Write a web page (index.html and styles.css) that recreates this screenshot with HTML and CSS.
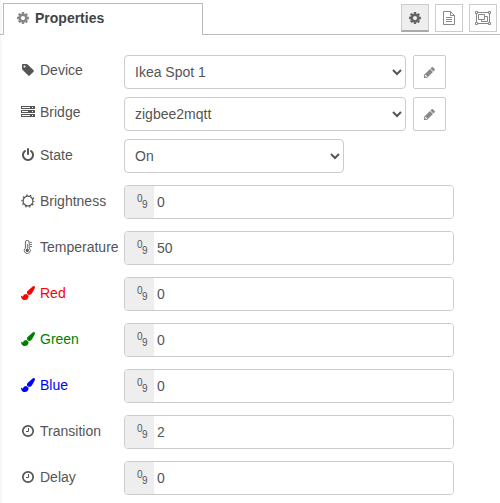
FILE: index.html
```
<!DOCTYPE html>
<html lang="en">
<head>
<meta charset="utf-8">
<title>Properties</title>
<link rel="stylesheet" href="styles.css">
</head>
<body>
<svg class="defs" aria-hidden="true">
  <symbol id="cog" viewBox="0 0 1792 1792"><path d="M1152 896q0-106-75-181t-181-75-181 75-75 181 75 181 181 75 181-75 75-181zm512-109v222q0 12-8 23t-20 13l-185 28q-19 54-39 91 35 50 107 138 10 12 10 25t-9 23q-27 37-99 108t-94 71q-12 0-26-9l-138-108q-44 23-91 38-16 136-29 186-7 28-36 28h-222q-14 0-24.500-8.500t-11.500-21.500l-28-184q-49-16-90-37l-141 107q-10 9-25 9-14 0-25-11-126-114-165-168-7-10-7-23 0-12 8-23 15-21 51-66.500t54-70.500q-27-50-41-99l-183-27q-13-2-21-12.500t-8-23.500v-222q0-12 8-23t19-13l186-28q14-46 39-92-40-57-107-138-10-12-10-24 0-10 9-23 26-36 98.500-107.500t94.500-71.500q13 0 26 10l138 107q44-23 91-38 16-136 29-186 7-28 36-28h222q14 0 24.500 8.500t11.500 21.500l28 184q49 16 90 37l142-107q9-9 24-9 13 0 25 10 129 119 165 170 7 8 7 22 0 12-8 23-15 21-51 66.500t-54 70.500q26 50 41 98l183 28q13 2 21 12.500t8 23.500z"/></symbol>
  <symbol id="pencil" viewBox="0 0 1792 1792"><path d="M491 1536l91-91-235-235-91 91v107h128v128h107zm469-1120l416 416-832 832h-416v-416zm683 96q0 53-37 90l-166 166-416-416 166-165q36-38 90-38 53 0 91 38l235 234q37 39 37 91z" fill-rule="evenodd"/></symbol>
  <symbol id="tag" viewBox="0 0 1792 1792"><path d="M576 448q0-53-37.500-90.500t-90.500-37.500-90.500 37.500-37.500 90.500 37.500 90.500 90.500 37.500 90.500-37.500 37.500-90.500zm1067 576q0 53-37 90l-491 492q-39 37-91 37-53 0-90-37l-715-716q-38-37-64.500-101t-26.500-117v-416q0-52 38-90t90-38h416q53 0 117 26.500t102 64.500l715 714q37 39 37 91z"/></symbol>
  <symbol id="power" viewBox="0 0 1792 1792"><path d="M1664 896q0 156-61 298t-164 245-245 164-298 61-298-61-245-164-164-245-61-298q0-182 80.500-343t226.500-270q43-32 95.500-25t83.500 50q32 42 24.500 94.500t-49.500 84.500q-98 74-151.500 181t-53.500 228q0 104 40.500 198.500t109.500 163.500 163.500 109.500 198.500 40.500 198.500-40.500 163.500-109.500 109.500-163.500 40.500-198.500q0-121-53.500-228t-151.500-181q-42-32-49.500-84.500t24.500-94.500q31-43 84-50t95 25q146 109 226.500 270t80.500 343zm-640-768v640q0 52-38 90t-90 38-90-38-38-90v-640q0-52 38-90t90-38 90 38 38 90z"/></symbol>
  <symbol id="clock" viewBox="0 0 14 14"><circle cx="7" cy="7" r="5.200" fill="none" stroke="currentColor" stroke-width="1.700"/><path d="M7.500 4v3.500H5" fill="none" stroke="currentColor"/></symbol>
  <symbol id="brush" viewBox="0 0 1792 1792"><path d="M1615 0q70 0 122.500 46.500t52.500 116.500q0 63-45 151-332 629-465 752-97 91-218 91-126 0-216.500-92.500t-90.500-219.500q0-128 92-212l638-579q59-54 130-54zm-909 1034q39 76 106.500 130t150.500 76l1 71q4 213-129.500 347t-348.500 134q-123 0-218-46.500t-152.500-127.500-86.500-183-29-220q7 5 41 30t62 44.500 59 36.500 46 17q41 0 55-37 25-66 57.500-112.500t69.500-76 88-47.500 103-25.500 125-10.500z"/></symbol>
  <symbol id="server" viewBox="0 0 14 14"><path fill-rule="evenodd" d="M0 1h14v3H0zM1 2v1h8V2zM11 2v1h1V2zM0 5h14v3H0zM1 6v1h6V6zM11 6v1h1V6zM0 9h14v3H0zM1 10v1h8v-1zM11 10v1h1v-1z"/></symbol>
  <symbol id="sun" viewBox="0 0 14 14"><circle cx="7" cy="7" r="4.900" fill="none" stroke="currentColor" stroke-width="1.200"/><circle cx="7" cy="7" r="6" fill="none" stroke="currentColor" stroke-width="1.300" stroke-dasharray="1.500 2.270" stroke-dashoffset=".75"/></symbol>
  <symbol id="thermo" viewBox="0 0 14 14"><path d="M4.400 8.200V2a1.900 1.600 0 0 1 3.800 0v6.200a3 3 0 1 1-3.800 0z" fill="none" stroke="currentColor" stroke-width=".9"/><path d="M5.900 4h.8v5a1.500 1.500 0 1 1-.8 0zM9 2h2v.8H9zM9 4h2v.8H9zM9 6h2v.8H9z"/></symbol>
  <symbol id="doc" viewBox="0 0 12 14"><path d="M.5.500h7l4 4v9H.5zM7.500.500v4h4M3 6.500h6M3 8.500h6M3 10.500h6" fill="none" stroke="currentColor"/></symbol>
  <symbol id="group" viewBox="0 0 16 14"><path d="M3 1.500h10M3 12.500h10M1.500 3v8M14.500 3v8M.5.500h2v2h-2zM13.500.500h2v2h-2zM.5 11.500h2v2h-2zM13.500 11.500h2v2h-2zM3.500 3.500h6v5h-6zM9.500 5.500h3v5h-6v-2" fill="none" stroke="currentColor"/></symbol>
</svg>
<main class="panel">
  <header class="tabs">
    <div class="tab"><svg class="icon"><use href="#cog"/></svg><span>Properties</span></div>
    <div class="tools">
      <button class="tool active" aria-label="Properties"><svg class="icon"><use href="#cog"/></svg></button>
      <button class="tool" aria-label="Description"><svg class="icon doc"><use href="#doc"/></svg></button>
      <button class="tool" aria-label="Appearance"><svg class="icon group"><use href="#group"/></svg></button>
    </div>
  </header>
  <form class="form">
    <div class="row high"><label><svg class="icon"><use href="#tag"/></svg>Device</label><select><option>Ikea Spot 1</option></select><button type="button" class="edit" aria-label="Edit device"><svg class="icon"><use href="#pencil"/></svg></button></div>
    <div class="row high"><label><svg class="icon"><use href="#server"/></svg>Bridge</label><select><option>zigbee2mqtt</option></select><button type="button" class="edit" aria-label="Edit bridge"><svg class="icon"><use href="#pencil"/></svg></button></div>
    <div class="row last-select"><label><svg class="icon"><use href="#power"/></svg>State</label><select class="short"><option>On</option></select></div>
    <div class="row typed"><label><svg class="icon"><use href="#sun"/></svg>Brightness</label><div class="field"><span class="type"><i>0</i><i>9</i></span><input value="0"></div></div>
    <div class="row typed"><label><svg class="icon"><use href="#thermo"/></svg>Temperature</label><div class="field"><span class="type"><i>0</i><i>9</i></span><input value="50"></div></div>
    <div class="row typed"><label class="red"><svg class="icon"><use href="#brush"/></svg>Red</label><div class="field"><span class="type"><i>0</i><i>9</i></span><input value="0"></div></div>
    <div class="row typed"><label class="green"><svg class="icon"><use href="#brush"/></svg>Green</label><div class="field"><span class="type"><i>0</i><i>9</i></span><input value="0"></div></div>
    <div class="row typed"><label class="blue"><svg class="icon"><use href="#brush"/></svg>Blue</label><div class="field"><span class="type"><i>0</i><i>9</i></span><input value="0"></div></div>
    <div class="row typed"><label><svg class="icon"><use href="#clock"/></svg>Transition</label><div class="field"><span class="type"><i>0</i><i>9</i></span><input value="2"></div></div>
    <div class="row typed"><label><svg class="icon"><use href="#clock"/></svg>Delay</label><div class="field"><span class="type"><i>0</i><i>9</i></span><input value="0"></div></div>
  </form>
</main>
</body>
</html>
```
FILE: styles.css
```
* { box-sizing: border-box; }
body { margin: 0; background: #fff; overflow: hidden; }
body, input, select, button { font: 14px/20px "Liberation Sans", Arial, sans-serif; color: #555; }
.defs { position: absolute; width: 0; height: 0; }
.panel { height: 503px; background: linear-gradient(90deg, #f5f5f5, #fff 3px); }
.icon { display: block; flex: none; width: 14px; height: 14px; fill: currentColor; }
.tabs { display: flex; justify-content: space-between; height: 35px; padding: 3px 3px 0; background: linear-gradient(#bbb, #bbb) 0 34px / 100% 1px no-repeat; }
.tab { display: flex; align-items: center; gap: 5px; width: 200px; height: 32px; padding: 0 0 3px 12px; border: 1px solid #bbb; border-bottom: 0; background: #fff; color: #444; font-weight: bold; }
.tab .icon { color: #888; }
.tab span { margin-top: -1px; }
.tools { display: flex; gap: 6px; padding-top: 1px; }
.tool { display: flex; align-items: center; justify-content: center; width: 28px; height: 28px; padding: 0; border: 1px solid #ccc; background: #fff; color: #888; }
.tool.active { background: #eee; border-bottom: 2px solid #aaa; color: #666; }
.icon.doc { width: 12px; }
.icon.group { width: 16px; }
.form { padding: 20px 0 0 21px; }
.row { display: flex; height: 34px; margin-bottom: 8px; }
.row.last-select { margin-bottom: 12px; }
.row.typed { margin-bottom: 12px; }
label { display: flex; align-items: center; gap: 5px; width: 103px; height: 32px; white-space: nowrap; }
.high label { height: 30px; }
.red { color: #f00; }
.green { color: #008000; }
.blue { color: #00f; }
select { width: 282px; height: 34px; margin: 0; padding: 4px 6px; border: 1px solid #ccc; border-radius: 4px; background-color: #fff; }
select.short { width: 220px; }
.edit { display: flex; align-items: center; justify-content: center; width: 33px; height: 34px; margin-left: 7px; padding: 0; border: 1px solid #ccc; border-radius: 2px; background: #fff; color: #888; }
.edit .icon { width: 13px; height: 13px; }
.field { display: flex; width: 330px; height: 34px; border: 1px solid #ccc; border-radius: 4px; overflow: hidden; }
.type { display: flex; flex: none; width: 29px; height: 32px; padding: 8px 0 0 12px; background: #eee; color: #555; font-size: 10px; line-height: 10px; }
.type i { width: 5px; font-style: normal; }
.type i + i { padding-top: 6px; }
.field input { flex: 1; min-width: 0; border: 0; padding: 0 3px; background: #fff; outline: 0; }
```
